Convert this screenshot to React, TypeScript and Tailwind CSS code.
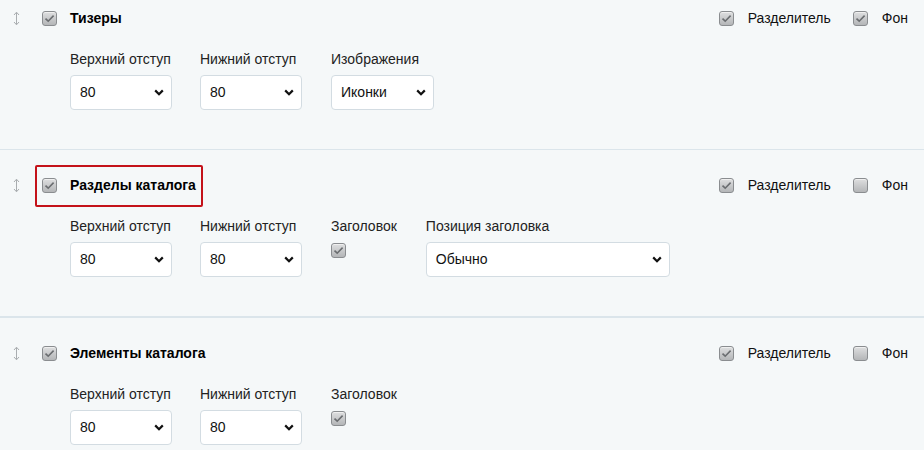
import React from 'react';

type Field =
  | { kind: 'select'; label: string; value: string; width: string }
  | { kind: 'check'; label: string; checked: boolean };

interface Block {
  title: string;
  on: boolean;
  divider: boolean;
  bg: boolean;
  highlight?: boolean;
  fields: Field[];
}

const blocks: Block[] = [
  {
    title: 'Тизеры',
    on: true,
    divider: true,
    bg: true,
    fields: [
      { kind: 'select', label: 'Верхний отступ', value: '80', width: 'w-[102px]' },
      { kind: 'select', label: 'Нижний отступ', value: '80', width: 'w-[102px]' },
      { kind: 'select', label: 'Изображения', value: 'Иконки', width: 'w-[103px]' },
    ],
  },
  {
    title: 'Разделы каталога',
    on: true,
    divider: true,
    bg: false,
    highlight: true,
    fields: [
      { kind: 'select', label: 'Верхний отступ', value: '80', width: 'w-[102px]' },
      { kind: 'select', label: 'Нижний отступ', value: '80', width: 'w-[102px]' },
      { kind: 'check', label: 'Заголовок', checked: true },
      { kind: 'select', label: 'Позиция заголовка', value: 'Обычно', width: 'w-[244px]' },
    ],
  },
  {
    title: 'Элементы каталога',
    on: true,
    divider: true,
    bg: false,
    fields: [
      { kind: 'select', label: 'Верхний отступ', value: '80', width: 'w-[102px]' },
      { kind: 'select', label: 'Нижний отступ', value: '80', width: 'w-[102px]' },
      { kind: 'check', label: 'Заголовок', checked: true },
    ],
  },
];

const Box = ({ checked }: { checked: boolean }) => (
  <span className="flex h-[15px] w-[15px] shrink-0 items-center justify-center rounded-[3px] border border-[#8a8d90] bg-gradient-to-b from-[#dedfe0] to-[#b4b6b8] shadow-[inset_0_1px_0_#efefef]">
    {checked && (
      <svg width="11" height="9" viewBox="0 0 11 9" fill="none">
        <path d="M1.5 4.6 L4.2 7.2 L9.6 1.6" stroke="#6a6d70" strokeWidth="1.6" />
      </svg>
    )}
  </span>
);

const DragHandle = () => (
  <svg width="7" height="15" viewBox="0 0 7 15" fill="none" className="shrink-0">
    <path d="M3.5 1.5 V13.5" stroke="#a9adb0" strokeWidth="1" />
    <path d="M1 4 L3.5 1.2 L6 4" stroke="#a9adb0" strokeWidth="1" />
    <path d="M1 11 L3.5 13.8 L6 11" stroke="#a9adb0" strokeWidth="1" />
  </svg>
);

const Chevron = () => (
  <svg width="10" height="7" viewBox="0 0 10 7" fill="none">
    <path d="M1.2 1.4 L5 5.2 L8.8 1.4" stroke="#111" strokeWidth="2.2" />
  </svg>
);

const FieldView = ({ f }: { f: Field }) => (
  <div className="flex flex-col">
    <span className="h-[16px] leading-[16px] text-[14px] text-[#222]">{f.label}</span>
    {f.kind === 'select' ? (
      <div
        className={`mt-[8px] flex h-[35px] items-center justify-between rounded-[4px] border border-[#d3dce2] bg-white pl-[9px] pr-[7px] text-[14px] text-[#111] ${f.width}`}
      >
        <span>{f.value}</span>
        <Chevron />
      </div>
    ) : (
      <div className="mt-[9px]">
        <Box checked={f.checked} />
      </div>
    )}
  </div>
);

const BlockRow = ({ b, first }: { b: Block; first: boolean }) => (
  <section
    className={`border-[#dbe5eb] pb-[39px] pt-[17px] ${first ? 'mt-[-17px]' : ''} ${
      b.highlight ? 'border-b-2' : 'border-b'
    }`}
  >
    <div className="flex h-[37px] items-center pl-[13px] pr-[16px]">
      <DragHandle />
      <div className="relative ml-[22px] flex items-center">
        <Box checked={b.on} />
        <span className="ml-[13px] text-[14px] font-bold text-black">{b.title}</span>
        {b.highlight && (
          <span className="pointer-events-none absolute left-[-7px] right-[-7px] top-[-10px] bottom-[-11px] rounded-[2px] border-2 border-[#c4121a]" />
        )}
      </div>
      <div className="ml-auto flex items-center">
        <Box checked={b.divider} />
        <span className="ml-[14px] text-[14px] text-[#111]">Разделитель</span>
        <span className="ml-[22px]">
          <Box checked={b.bg} />
        </span>
        <span className="ml-[14px] text-[14px] text-[#111]">Фон</span>
      </div>
    </div>
    <div className="mt-[14px] flex gap-[28px] pl-[70px]">
      {b.fields.map((f, i) => (
        <div key={i} className={i === 2 ? 'ml-px mr-px' : ''}>
          <FieldView f={f} />
        </div>
      ))}
    </div>
  </section>
);

export default function App() {
  return (
    <div
      className="h-[450px] w-[924px] overflow-hidden bg-[#f5f8f9]"
      style={{ fontFamily: '"Liberation Sans", Arial, sans-serif' }}
    >
      {blocks.map((b, i) => (
        <BlockRow key={b.title} b={b} first={i === 0} />
      ))}
    </div>
  );
}
